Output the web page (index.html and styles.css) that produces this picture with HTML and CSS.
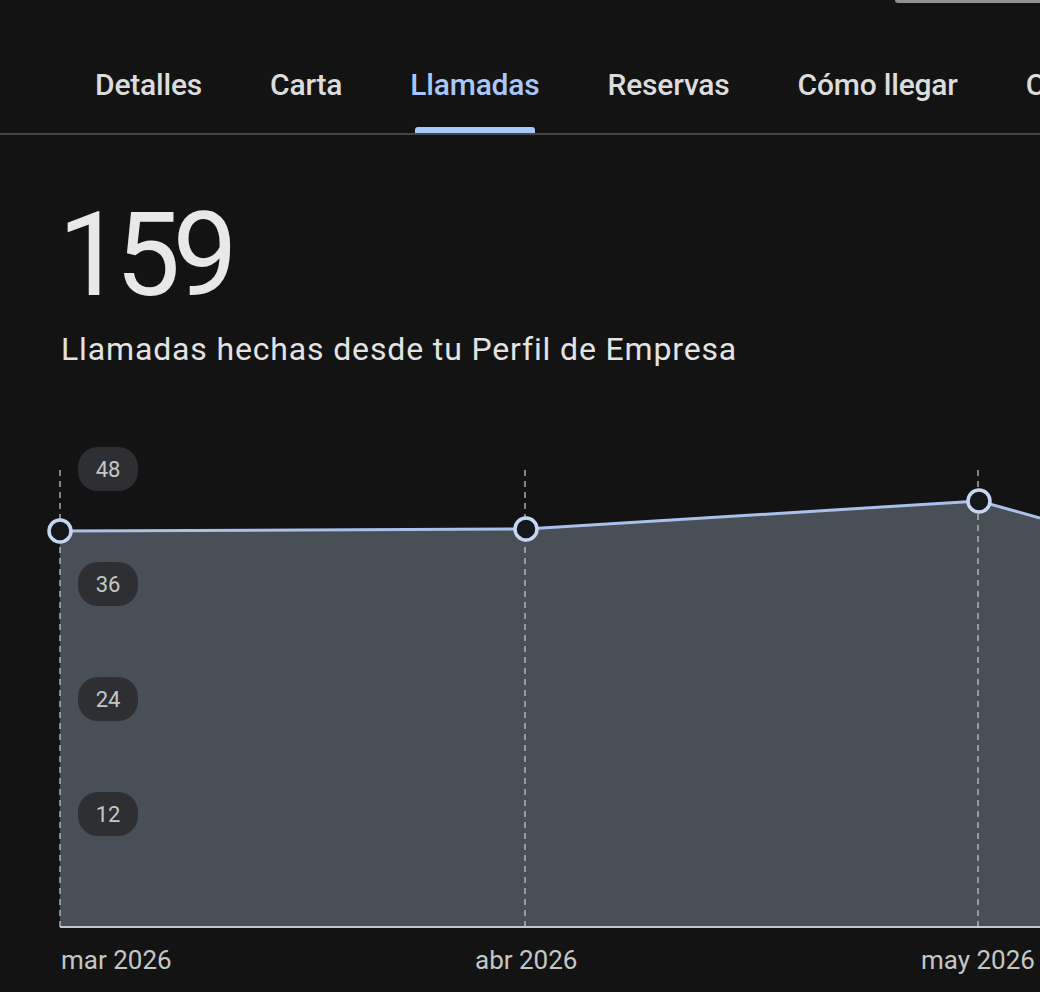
FILE: index.html
```html
<!DOCTYPE html>
<html lang="es">
<head>
<meta charset="utf-8">
<title>Llamadas</title>
<link rel="stylesheet" href="styles.css">
</head>
<body>
<div class="topstrip"><div class="topedge"></div></div>
<nav class="tabs">
  <div class="tab"><span class="tab-label">Detalles</span></div>
  <div class="tab"><span class="tab-label">Carta</span></div>
  <div class="tab active"><span class="tab-label">Llamadas</span></div>
  <div class="tab"><span class="tab-label">Reservas</span></div>
  <div class="tab"><span class="tab-label">Cómo llegar</span></div>
  <div class="tab"><span class="tab-label">Clics en el sitio web</span></div>
</nav>
<main class="content">
  <div class="metric">159</div>
  <div class="metric-label">Llamadas hechas desde tu Perfil de Empresa</div>
</main>
<svg class="chart" width="1040" height="552" viewBox="0 440 1040 552" xmlns="http://www.w3.org/2000/svg">
  <polygon class="area" points="60,531 526,529 979,501 1040,518 1040,927 60,927"/>
  <g class="grid">
    <line x1="60" y1="470" x2="60" y2="927"/>
    <line x1="525" y1="470" x2="525" y2="927"/>
    <line x1="978" y1="470" x2="978" y2="927"/>
  </g>
  <line class="baseline" x1="60" y1="927" x2="1040" y2="927"/>
  <polyline class="series" points="60,531 526,529 979,501 1040,518"/>
  <circle class="dot" cx="60" cy="531" r="11"/>
  <circle class="dot" cx="526" cy="529" r="11"/>
  <circle class="dot" cx="979" cy="501" r="11"/>
  <g class="ypill">
    <rect x="78" y="447" width="60" height="44" rx="20"/>
    <text x="108" y="477">48</text>
  </g>
  <g class="ypill">
    <rect x="78" y="562" width="60" height="44" rx="20"/>
    <text x="108" y="592">36</text>
  </g>
  <g class="ypill">
    <rect x="78" y="677" width="60" height="44" rx="20"/>
    <text x="108" y="707">24</text>
  </g>
  <g class="ypill">
    <rect x="78" y="792" width="60" height="44" rx="20"/>
    <text x="108" y="822">12</text>
  </g>
  <text class="xlabel" x="61" y="969">mar 2026</text>
  <text class="xlabel" x="475" y="969">abr 2026</text>
  <text class="xlabel" x="921" y="969">may 2026</text>
</svg>
</body>
</html>
```
FILE: styles.css
```css
html, body {
  margin: 0;
  padding: 0;
  background: #131314;
  overflow: hidden;
}
body {
  width: 1040px;
  height: 992px;
  font-family: Roboto, "Noto Sans", "Liberation Sans", sans-serif;
  color: #e3e3e3;
}
.topstrip {
  display: flex;
  justify-content: flex-end;
  height: 3px;
}
.topedge {
  width: 145px;
  height: 3px;
  background: #8e918f;
  border-bottom-left-radius: 3px;
}
.tabs {
  display: flex;
  align-items: flex-end;
  height: 130px;
  padding-left: 95px;
  gap: 68px;
  border-bottom: 2px solid #444746;
  white-space: nowrap;
  overflow: hidden;
}
.tab {
  display: flex;
  flex-direction: column;
  align-items: center;
  flex-shrink: 0;
}
.tab-label {
  font-size: 30px;
  line-height: 34px;
  font-weight: 500;
  letter-spacing: -0.2px;
  color: #dcdcdc;
  padding-bottom: 31px;
}
.tab.active .tab-label {
  color: #a8c7fa;
  padding-bottom: 25px;
}
.tab.active::after {
  content: "";
  display: block;
  width: 120px;
  height: 6px;
  background: #a8c7fa;
  border-radius: 3px 3px 0 0;
}
.content {
  padding-left: 58px;
}
.metric {
  margin-top: 62px;
  font-size: 116px;
  line-height: 117px;
  letter-spacing: -8px;
  color: #e8e8e8;
}
.metric-label {
  margin-top: 17px;
  font-size: 32px;
  line-height: 36px;
  letter-spacing: 0.85px;
  color: #e3e3e3;
  padding-left: 3px;
}
.chart {
  display: block;
  margin-top: 73px;
}
.area {
  fill: #494f57;
}
.grid line {
  stroke: #c4c7c5;
  stroke-width: 1.5;
  stroke-dasharray: 6 5;
  opacity: 0.85;
}
.baseline {
  stroke: #c4c7c5;
  stroke-width: 2;
}
.series {
  fill: none;
  stroke: #a8c0ea;
  stroke-width: 3;
}
.dot {
  fill: #15171b;
  stroke: #c6d6f2;
  stroke-width: 3.5;
}
.ypill rect {
  fill: #2d2f32;
}
.ypill text {
  fill: #c4c7c5;
  font-family: Roboto, "Noto Sans", sans-serif;
  font-size: 22px;
  text-anchor: middle;
}
.xlabel {
  fill: #c4c7c5;
  font-family: Roboto, "Noto Sans", sans-serif;
  font-size: 26px;
}
```
